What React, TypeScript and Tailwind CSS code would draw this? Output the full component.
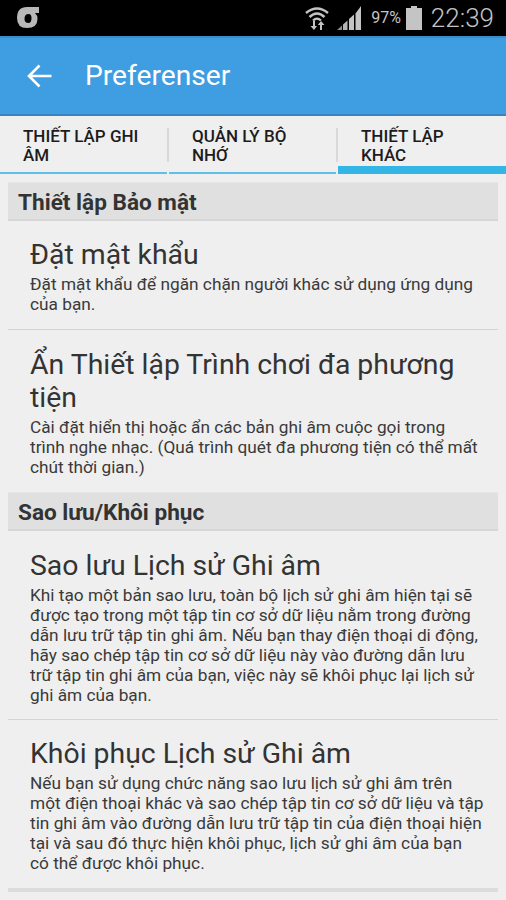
const font = { fontFamily: "Roboto, sans-serif" };

const SectionHeader = ({ title }: { title: string }) => (
  <div className="mx-[8px] h-[39px] pl-[10px] pt-[3px] flex items-center bg-[#e0e0e0] border-t border-[#e6e6e6] border-b-2 border-b-[#d6d6d6] text-[22.6px] font-bold text-[#333333]">
    {title}
  </div>
);

const PrefRow = ({ title, desc, className }: { title: string; desc: string; className: string }) => (
  <div className={`mx-[8px] pl-[22px] pr-[14px] ${className}`}>
    <div className="text-[28.4px] leading-[33px] mb-[3px] text-[#333333]">{title}</div>
    <div className="text-[17.25px] leading-[20px] text-[#3a3a3a]">{desc}</div>
  </div>
);

const Tab = ({ label, active, divider, className }: { label: string; active?: boolean; divider?: boolean; className: string }) => (
  <div className={`relative h-[56px] pl-[23px] pr-[20px] pt-[9px] text-[17px] leading-[19px] font-medium text-[#1c1c1c] ${className} ${active ? "border-b-[8px] border-[#33b5e5]" : "border-b-[2px] border-[#5cc0e8]"}`}>
    {label}
    {divider && <div className="absolute right-[-2px] top-[10px] h-[34px] w-[2px] bg-[#d9d9d9]" />}
  </div>
);

export default function App() {
  return (
    <div className="w-[506px] h-[900px] overflow-hidden bg-[#efefef]" style={font}>
      {/* status bar */}
      <div className="h-[36px] bg-black flex items-center pl-[17px] pr-[12px] text-[#bdbdbd]">
        <svg width="23" height="22" viewBox="0 0 23 22">
          <path d="M0 11 Q0 0 10 0 H22 V6 H18 Q20.5 8 20.5 12 Q20.5 21 10 21 Q0 21 0 11 Z M11.5 7 Q7.5 7 7.5 12 Q7.5 16 11.5 16 Q14.5 16 14.5 11 Q14.5 7 11.5 7 Z" fill="#b8b8b8" fillRule="evenodd" />
        </svg>
        <div className="flex-1" />
        <svg width="24" height="26" viewBox="0 0 24 26" className="mr-[8px] mt-[-2px]">
          <path d="M1 9 Q12 0 23 9" stroke="#c4c4c4" strokeWidth="2.4" fill="none" />
          <path d="M4.5 13 Q12 6 19.5 13" stroke="#c4c4c4" strokeWidth="2.4" fill="none" />
          <path d="M8 16.5 Q12 12.5 16 16.5" stroke="#c4c4c4" strokeWidth="2.2" fill="none" />
          <path d="M8 17 V22 H5.5 L9 26 L12 22 H10 V17 Z M15 26 V21 H12.8 L16 17 L19.5 21 H17 V26 Z" fill="#c4c4c4" />
        </svg>
        <svg width="24" height="24" viewBox="0 0 24 24" className="mr-[10px]">
          <path d="M0 24 L5 19.5 V24 Z" fill="#8c8c8c" />
          <path d="M6 18.5 L10.5 14.5 V24 H6 Z" fill="#b4b4b4" />
          <path d="M12 13 L17 8.5 V24 H12 Z" fill="#c4c4c4" />
          <path d="M18.5 7.5 L24 0 V24 H18.5 Z" fill="#c4c4c4" />
        </svg>
        <span className="text-[16px] text-[#c4c4c4] mr-[5px]">97%</span>
        <svg width="16" height="24" viewBox="0 0 16 24" className="mr-[9px]">
          <path d="M5 0 H11 V2 H16 V24 H0 V2 H5 Z" fill="#c4c4c4" />
        </svg>
        <span className="text-[26px] font-light text-[#c4c4c4]">22:39</span>
      </div>

      {/* app bar */}
      <div className="h-[80px] bg-[#3f9de1] border-t-2 border-t-[#3b8cca] border-b-2 border-[#3b83bd] flex items-center text-white">
        <svg width="25" height="24" viewBox="0 0 25 24" className="ml-[27px]" fill="none" stroke="#ffffff" strokeWidth="2.6">
          <path d="M2 12 H24.5 M12.5 1.5 L2 12 L12.5 22.5" />
        </svg>
        <span className="ml-[33px] text-[28.2px]">Preferenser</span>
      </div>

      {/* tabs */}
      <div className="flex gap-[2px] pt-[2px]">
        <Tab label="THIẾT LẬP GHI ÂM" divider className="w-[167px]" />
        <Tab label="QUẢN LÝ BỘ NHỚ" divider className="w-[167px]" />
        <Tab label="THIẾT LẬP KHÁC" active className="flex-1" />
      </div>

      <div className="pt-[8px]">
        <SectionHeader title="Thiết lập Bảo mật" />
        <PrefRow title="Đặt mật khẩu" desc="Đặt mật khẩu để ngăn chặn người khác sử dụng ứng dụng của bạn." className="pt-[17px] pb-[15px] border-b border-[#d4d4d4]" />
        <PrefRow title="Ẩn Thiết lập Trình chơi đa phương tiện" desc="Cài đặt hiển thị hoặc ẩn các bản ghi âm cuộc gọi trong trình nghe nhạc. (Quá trình quét đa phương tiện có thể mất chút thời gian.)" className="pt-[18px] pb-[15px]" />
        <SectionHeader title="Sao lưu/Khôi phục" />
        <PrefRow title="Sao lưu Lịch sử Ghi âm" desc="Khi tạo một bản sao lưu, toàn bộ lịch sử ghi âm hiện tại sẽ được tạo trong một tập tin cơ sở dữ liệu nằm trong đường dẫn lưu trữ tập tin ghi âm. Nếu bạn thay điện thoại di động, hãy sao chép tập tin cơ sở dữ liệu này vào đường dẫn lưu trữ tập tin ghi âm của bạn, việc này sẽ khôi phục lại lịch sử ghi âm của bạn." className="pt-[18px] pb-[14px] border-b border-[#d4d4d4]" />
        <PrefRow title="Khôi phục Lịch sử Ghi âm" desc="Nếu bạn sử dụng chức năng sao lưu lịch sử ghi âm trên một điện thoại khác và sao chép tập tin cơ sở dữ liệu và tập tin ghi âm vào đường dẫn lưu trữ tập tin của điện thoại hiện tại và sau đó thực hiện khôi phục, lịch sử ghi âm của bạn có thể được khôi phục." className="pt-[17px] pb-[15px]" />
        <div className="mx-[8px] h-[4px] bg-[#dcdcdc]" />
      </div>
    </div>
  );
}
